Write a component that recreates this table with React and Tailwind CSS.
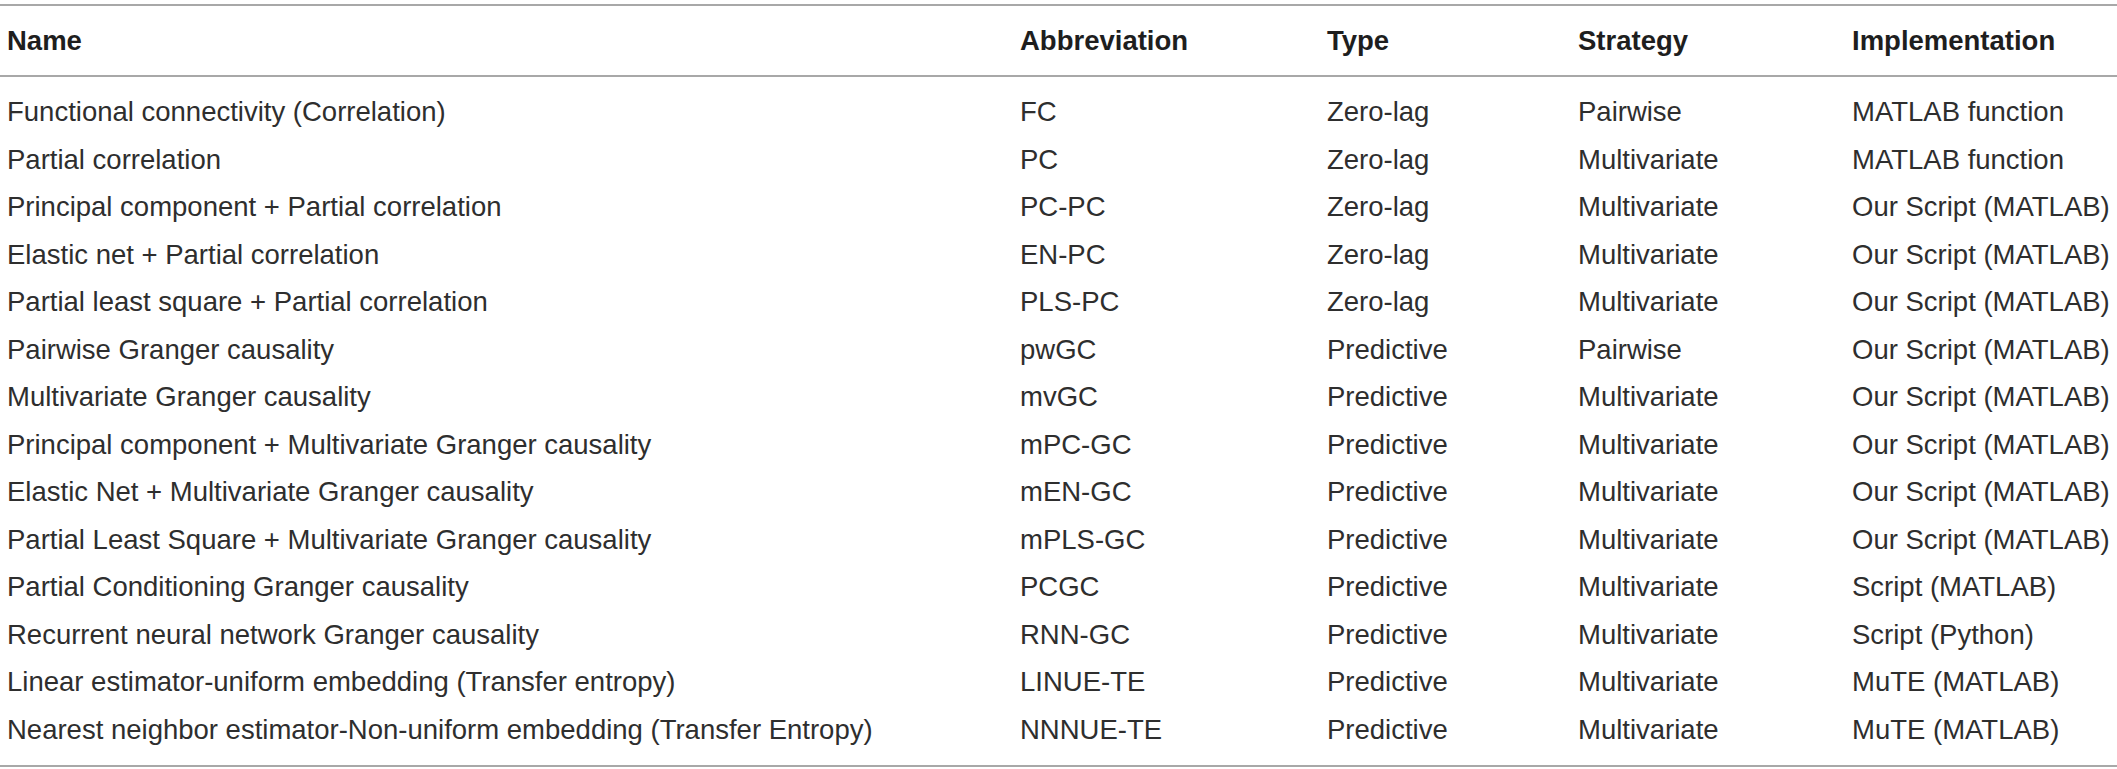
const rows = [
  ["Functional connectivity (Correlation)", "FC", "Zero-lag", "Pairwise", "MATLAB function"],
  ["Partial correlation", "PC", "Zero-lag", "Multivariate", "MATLAB function"],
  ["Principal component + Partial correlation", "PC-PC", "Zero-lag", "Multivariate", "Our Script (MATLAB)"],
  ["Elastic net + Partial correlation", "EN-PC", "Zero-lag", "Multivariate", "Our Script (MATLAB)"],
  ["Partial least square + Partial correlation", "PLS-PC", "Zero-lag", "Multivariate", "Our Script (MATLAB)"],
  ["Pairwise Granger causality", "pwGC", "Predictive", "Pairwise", "Our Script (MATLAB)"],
  ["Multivariate Granger causality", "mvGC", "Predictive", "Multivariate", "Our Script (MATLAB)"],
  ["Principal component + Multivariate Granger causality", "mPC-GC", "Predictive", "Multivariate", "Our Script (MATLAB)"],
  ["Elastic Net + Multivariate Granger causality", "mEN-GC", "Predictive", "Multivariate", "Our Script (MATLAB)"],
  ["Partial Least Square + Multivariate Granger causality", "mPLS-GC", "Predictive", "Multivariate", "Our Script (MATLAB)"],
  ["Partial Conditioning Granger causality", "PCGC", "Predictive", "Multivariate", "Script (MATLAB)"],
  ["Recurrent neural network Granger causality", "RNN-GC", "Predictive", "Multivariate", "Script (Python)"],
  ["Linear estimator-uniform embedding (Transfer entropy)", "LINUE-TE", "Predictive", "Multivariate", "MuTE (MATLAB)"],
  ["Nearest neighbor estimator-Non-uniform embedding (Transfer Entropy)", "NNNUE-TE", "Predictive", "Multivariate", "MuTE (MATLAB)"],
];

const cols = "grid grid-cols-[1013px_307px_251px_274px_1fr] pl-[7px]";

export default function App() {
  return (
    <div className="bg-white w-[2117px] h-[769px] overflow-hidden pt-[4px] font-['Liberation_Sans',Arial,sans-serif] text-[27.5px] text-[#2e2e2e] whitespace-nowrap">
      <div className="border-t-2 border-b-2 border-[#a8a8a8]">
        <div className={`${cols} h-[71px] items-center border-b-2 border-[#a8a8a8] font-bold text-[#1e1e1e]`}>
          <div>Name</div>
          <div>Abbreviation</div>
          <div>Type</div>
          <div>Strategy</div>
          <div>Implementation</div>
        </div>
        <div className="pt-[11px] pb-[12px]">
          {rows.map((r, i) => (
            <div key={i} className={`${cols} h-[47.5px] items-center`}>
              {r.map((c, j) => (
                <div key={j}>{c}</div>
              ))}
            </div>
          ))}
        </div>
      </div>
    </div>
  );
}
